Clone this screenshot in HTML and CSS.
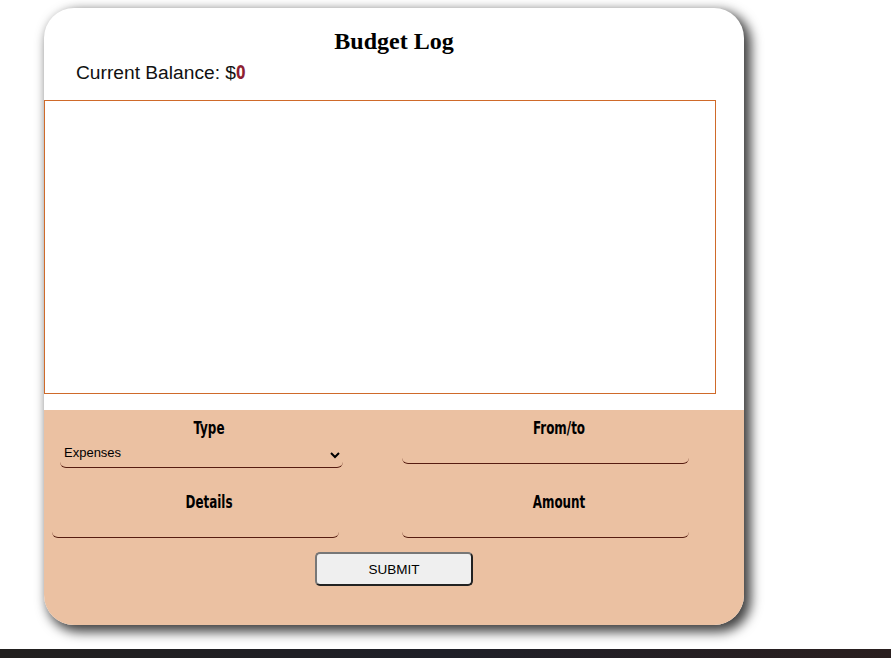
FILE: index.html
```html
<!DOCTYPE html>
<html>
<head>
<meta charset="utf-8">
<title>Budget Log</title>
<link rel="stylesheet" href="styles.css">
</head>
<body>
<div class="page">
  <div class="card">
    <div class="header">
      <h1 class="title">Budget Log</h1>
      <p class="balance">Current Balance: $<span class="balance-value">0</span></p>
    </div>
    <div class="log"></div>
    <form class="entry">
      <div class="field">
        <label class="label">Type</label>
        <select class="select">
          <option>Expenses</option>
          <option>Income</option>
        </select>
      </div>
      <div class="field">
        <label class="label">From/to</label>
        <input class="input" type="text">
      </div>
      <div class="field">
        <label class="label">Details</label>
        <input class="input" type="text">
      </div>
      <div class="field">
        <label class="label">Amount</label>
        <input class="input" type="text">
      </div>
      <div class="actions">
        <button class="submit" type="button">SUBMIT</button>
      </div>
    </form>
  </div>
</div>
<div class="taskbar"></div>
</body>
</html>
```
FILE: styles.css
```css
html, body {
  margin: 0;
  padding: 0;
  background: #ffffff;
  overflow: hidden;
}
.page {
  padding: 8px 0 0 44px;
}
.card {
  width: 700px;
  height: 617px;
  background: #ffffff;
  border-radius: 30px;
  overflow: hidden;
  box-shadow: 5px 5px 12px 2px rgba(0, 0, 0, 0.75);
  display: flex;
  flex-direction: column;
}
.header {
  padding-top: 19px;
}
.title {
  margin: 0;
  font-family: "Liberation Serif", serif;
  font-weight: bold;
  font-size: 24px;
  line-height: 28px;
  text-align: center;
  color: #000;
}
.balance {
  margin: 6px 0 0 32px;
  font-family: "Liberation Sans", Arial, sans-serif;
  font-size: 19.2px;
  line-height: 22px;
  color: #111;
}
.balance-value {
  display: inline-block;
  font-family: "DejaVu Sans Condensed", "DejaVu Sans", sans-serif;
  font-stretch: condensed;
  font-weight: bold;
  color: #8e1f33;
  font-size: 19px;
  transform: scaleX(0.8);
  transform-origin: left center;
}
.log {
  margin-top: 16px;
  width: 670px;
  height: 292px;
  border: 1px solid #cf6a2a;
  flex: none;
}
.entry {
  margin-top: 16px;
  flex: 1;
  background: #ebc1a2;
  display: grid;
  grid-template-columns: 330px 330px;
  column-gap: 20px;
  row-gap: 25px;
  padding: 9px 20px 0 0;
  align-content: start;
}
.field {
  display: flex;
  flex-direction: column;
  align-items: flex-start;
  height: 49px;
}
.label {
  align-self: stretch;
  text-align: center;
  font-family: "DejaVu Sans Condensed", "DejaVu Sans", sans-serif;
  font-stretch: condensed;
  font-weight: bold;
  font-size: 17px;
  line-height: 18px;
  color: #000;
  transform: scaleX(0.78);
}
.input {
  margin: 5px 0 0 8px;
  width: 287px;
  height: 22px;
  box-sizing: border-box;
  padding: 0 4px;
  border: none;
  border-bottom: 1px solid #561c10;
  border-radius: 6px;
  background: transparent;
  outline: none;
  font-family: "Liberation Sans", Arial, sans-serif;
  font-size: 13px;
}
.select {
  margin: 5px 0 0 16px;
  width: 283px;
  height: 26px;
  box-sizing: border-box;
  padding: 0 0 4px 0;
  border: none;
  border-bottom: 1px solid #561c10;
  border-radius: 6px;
  background: transparent;
  font-family: "Liberation Sans", Arial, sans-serif;
  font-size: 13px;
  color: #000;
}
.actions {
  grid-column: 1 / -1;
  display: flex;
  justify-content: center;
  margin-top: -15px;
  padding-left: 20px;
}
.submit {
  width: 158px;
  height: 34px;
  background: #efefef;
  border: 2px solid;
  border-color: #777777 #222222 #222222 #777777;
  border-radius: 5px;
  font-family: "Liberation Sans", Arial, sans-serif;
  font-size: 13.5px;
  color: #000;
}
.taskbar {
  margin-top: 24px;
  height: 12px;
  background: linear-gradient(90deg, #22201f, #1f2028 50%, #2a1f1f);
}
```
